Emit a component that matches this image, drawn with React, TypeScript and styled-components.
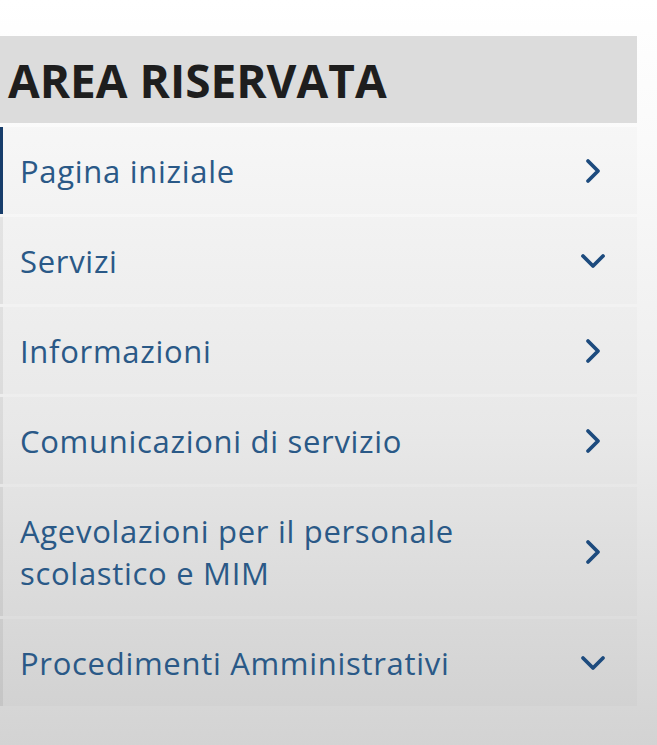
import React from 'react';
import styled, { createGlobalStyle } from 'styled-components';

interface IMenuItem {
  label: string[];
  icon: 'right' | 'down';
  active?: boolean;
}

const items: IMenuItem[] = [
  { label: ['Pagina iniziale'], icon: 'right', active: true },
  { label: ['Servizi'], icon: 'down' },
  { label: ['Informazioni'], icon: 'right' },
  { label: ['Comunicazioni di servizio'], icon: 'right' },
  { label: ['Agevolazioni per il personale', 'scolastico e MIM'], icon: 'right' },
  { label: ['Procedimenti Amministrativi'], icon: 'down' },
];

const Chevron: React.FC<{ dir: 'right' | 'down' }> = ({ dir }) => (
  <IconBox>
    <svg width="26" height="26" viewBox="0 0 26 26" fill="none">
      <polyline
        points={dir === 'right' ? '8,3 18,13 8,23' : '3,8 13,18 23,8'}
        stroke="#1d4b7e"
        strokeWidth="3.8"
        strokeLinecap="round"
        strokeLinejoin="round"
      />
    </svg>
  </IconBox>
);

const App: React.FC = () => (
  <>
    <GlobalStyle />
    <Page>
      <Sidebar>
        <Header>AREA RISERVATA</Header>
        <MenuList>
          {items.map((item) => (
            <MenuRow key={item.label[0]} active={!!item.active}>
              <RowText>
                {item.label.map((line) => (
                  <span key={line}>{line}</span>
                ))}
              </RowText>
              <Chevron dir={item.icon} />
            </MenuRow>
          ))}
        </MenuList>
      </Sidebar>
    </Page>
  </>
);

const GlobalStyle = createGlobalStyle`
  html, body {
    margin: 0;
    padding: 0;
  }

  body {
    font-family: "Open Sans", "Liberation Sans", sans-serif;
    background: linear-gradient(180deg, #ffffff 0px, #fafafa 140px, #ececec 430px, #d3d3d3 745px);
    min-height: 745px;
  }
`;

const Page = styled.div`
  width: 657px;
  height: 745px;
  padding-top: 36px;
  box-sizing: border-box;
`;

const Sidebar = styled.div`
  width: 637px;
  display: flex;
  flex-direction: column;
  gap: 4px;
`;

const Header = styled.h2`
  margin: 0;
  height: 87px;
  display: flex;
  align-items: center;
  padding: 0 0 0 8px;
  background: #dcdcdc;
  color: #1e1e1e;
  font-size: 46px;
  font-weight: 700;
`;

const MenuList = styled.div`
  display: flex;
  flex-direction: column;
  gap: 3px;
`;

const MenuRow = styled.div<{ active: boolean }>`
  display: flex;
  align-items: center;
  justify-content: space-between;
  box-sizing: border-box;
  padding: 22.5px 31px 22.5px 17px;
  border-left: 3px solid ${({ active }) => (active ? '#173d6b' : 'rgba(0, 0, 0, 0.06)')};
  background: rgba(0, 0, 0, 0.015);
  cursor: pointer;
`;

const RowText = styled.div`
  display: flex;
  flex-direction: column;
  font-size: 31px;
  line-height: 42px;
  color: #2a5987;
  letter-spacing: 0.7px;
`;

const IconBox = styled.div`
  display: flex;
  width: 26px;
  height: 26px;
`;

export default App;
